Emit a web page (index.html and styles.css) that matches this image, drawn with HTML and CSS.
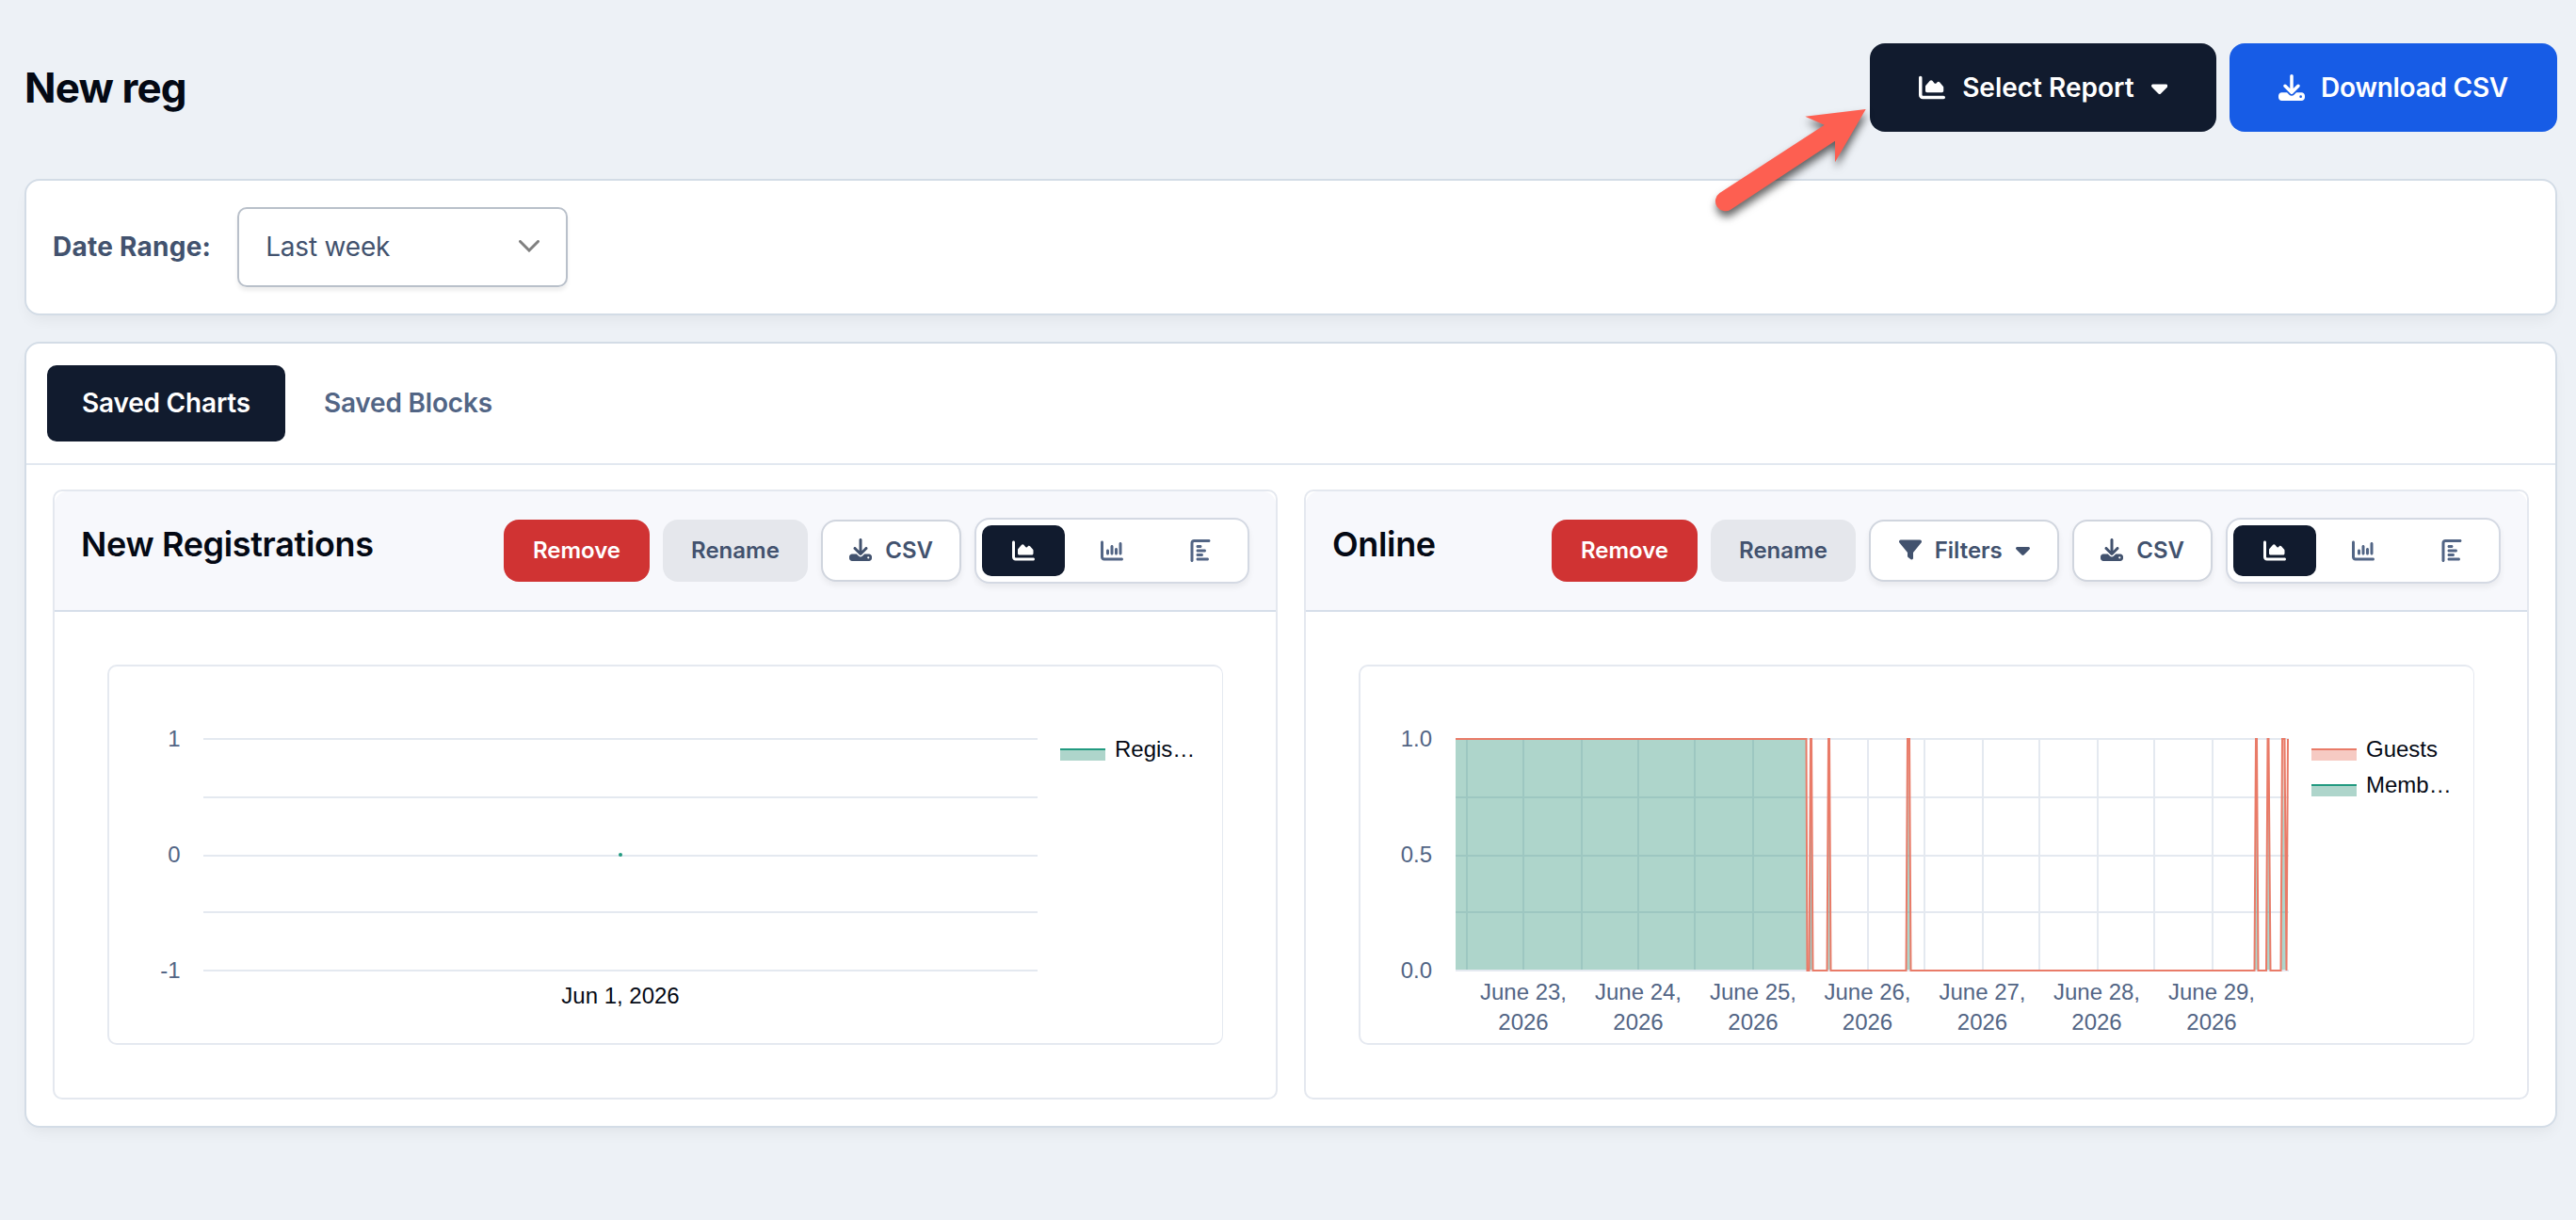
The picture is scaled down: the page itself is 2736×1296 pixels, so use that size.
FILE: index.html
```html
<!DOCTYPE html>
<html lang="en">
<head>
  <meta charset="UTF-8">
  <meta name="viewport" content="width=device-width, initial-scale=1.0">
  <title>New reg</title>
  <link rel="stylesheet" href="styles.css">
</head>
<body>
  <!-- Icon sprite -->
  <svg class="sprite" width="0" height="0">
    <symbol id="i-area" viewBox="0 0 512 512"><path d="M64 64c0-17.7-14.3-32-32-32S0 46.3 0 64V400c0 44.2 35.8 80 80 80H480c17.7 0 32-14.3 32-32s-14.3-32-32-32H80c-8.8 0-16-7.2-16-16V64zm96 288H448c17.7 0 32-14.3 32-32V251.8c0-7.6-2.7-15-7.7-20.8l-65.8-76.8c-12.1-14.2-33.7-15-46.9-1.8l-21 21c-10 10-26.4 9.2-35.4-1.6l-39.2-47c-12.6-15.1-35.7-15.4-48.7-.6L135.9 215c-5.1 5.8-7.9 13.3-7.9 21.1v84c0 17.7 14.3 32 32 32z"/></symbol>
    <symbol id="i-column" viewBox="0 0 512 512"><path d="M32 32c17.7 0 32 14.3 32 32V400c0 8.8 7.2 16 16 16H480c17.7 0 32 14.3 32 32s-14.3 32-32 32H80c-44.2 0-80-35.8-80-80V64C0 46.3 14.3 32 32 32zM160 224c17.7 0 32 14.3 32 32v64c0 17.7-14.3 32-32 32s-32-14.3-32-32V256c0-17.7 14.3-32 32-32zm128-64V320c0 17.7-14.3 32-32 32s-32-14.3-32-32V160c0-17.7 14.3-32 32-32s32 14.3 32 32zm64 32c17.7 0 32 14.3 32 32v96c0 17.7-14.3 32-32 32s-32-14.3-32-32V224c0-17.7 14.3-32 32-32zM480 96V320c0 17.7-14.3 32-32 32s-32-14.3-32-32V96c0-17.7 14.3-32 32-32s32 14.3 32 32z"/></symbol>
    <symbol id="i-download" viewBox="0 0 512 512"><path d="M288 32c0-17.7-14.3-32-32-32s-32 14.3-32 32V274.7l-73.4-73.4c-12.5-12.5-32.8-12.5-45.3 0s-12.5 32.8 0 45.3l128 128c12.5 12.5 32.8 12.5 45.3 0l128-128c12.5-12.5 12.5-32.8 0-45.3s-32.8-12.5-45.3 0L288 274.7V32zM64 352c-35.3 0-64 28.7-64 64v32c0 35.3 28.7 64 64 64H448c35.3 0 64-28.7 64-64V416c0-35.3-28.7-64-64-64H346.5l-45.3 45.3c-25 25-65.5 25-90.5 0L165.5 352H64zm368 56a24 24 0 1 1 0 48 24 24 0 1 1 0-48z"/></symbol>
    <symbol id="i-filter" viewBox="0 0 512 512"><path d="M3.9 54.9C10.5 40.9 24.5 32 40 32H472c15.5 0 29.5 8.9 36.1 22.9s4.6 30.5-5.2 42.5L320 320.9V448c0 12.1-6.8 23.2-17.7 28.6s-23.8 4.3-33.5-3l-64-48c-8.1-6-12.8-15.5-12.8-25.6V320.9L9 97.3C-.7 85.4-2.8 68.8 3.9 54.9z"/></symbol>
    <symbol id="i-caret" viewBox="0 0 320 512"><path d="M137.4 374.6c12.5 12.5 32.8 12.5 45.3 0l128-128c9.2-9.2 11.9-22.9 6.9-34.9s-16.6-19.8-29.6-19.8L32 192c-12.9 0-24.6 7.8-29.6 19.8s-2.2 25.7 6.9 34.9l128 128z"/></symbol>
  </svg>

  <header class="page-header">
    <h1 class="page-title">New reg</h1>
    <div class="page-actions">
      <button class="btn btn-dark">
        <svg class="icon"><use href="#i-area"/></svg>
        <span>Select Report</span>
        <svg class="icon icon-caret"><use href="#i-caret"/></svg>
      </button>
      <button class="btn btn-primary">
        <svg class="icon"><use href="#i-download"/></svg>
        <span>Download CSV</span>
      </button>
    </div>
  </header>

  <section class="card filter-card">
    <span class="filter-label">Date Range:</span>
    <div class="select">
      <span>Last week</span>
      <svg class="select-arrow" viewBox="0 0 22 13"><path d="M1.5 1.5L11 11L20.5 1.5"/></svg>
    </div>
  </section>

  <section class="card">
    <nav class="tabs">
      <a class="tab active">Saved Charts</a>
      <a class="tab">Saved Blocks</a>
    </nav>

    <div class="panels">
      <!-- New registrations -->
      <article class="panel">
        <div class="panel-header">
          <h2 class="panel-title">New Registrations</h2>
          <div class="toolbar">
            <button class="btn-sm btn-danger">Remove</button>
            <button class="btn-sm btn-muted">Rename</button>
            <button class="btn-sm btn-outline"><svg class="icon"><use href="#i-download"/></svg><span>CSV</span></button>
            <div class="chart-switch">
              <button class="active"><svg class="icon"><use href="#i-area"/></svg></button>
              <button><svg class="icon"><use href="#i-column"/></svg></button>
              <button><svg class="icon rotated"><use href="#i-column"/></svg></button>
            </div>
          </div>
        </div>
        <div class="panel-body">
          <svg class="chart" viewBox="116.5 708 1181 400">
            <g class="grid">
              <path d="M216 785H1102M216 847H1102M216 909H1102M216 969H1102M216 1031H1102"/>
            </g>
            <circle class="point" cx="659" cy="908" r="2"/>
            <g class="axis-y">
              <text x="191.5" y="793">1</text>
              <text x="191.5" y="916">0</text>
              <text x="191.5" y="1039">-1</text>
            </g>
            <text class="axis-x dark" x="659" y="1066">Jun 1, 2026</text>
            <rect class="fill-members" x="1126" y="796" width="48" height="12"/>
            <path class="line-members" d="M1126 796H1174"/>
            <text class="legend" x="1184" y="804">Regis…</text>
          </svg>
        </div>
      </article>

      <!-- Online -->
      <article class="panel">
        <div class="panel-header">
          <h2 class="panel-title">Online</h2>
          <div class="toolbar">
            <button class="btn-sm btn-danger">Remove</button>
            <button class="btn-sm btn-muted">Rename</button>
            <button class="btn-sm btn-outline btn-filters"><svg class="icon"><use href="#i-filter"/></svg><span>Filters</span><svg class="icon icon-caret"><use href="#i-caret"/></svg></button>
            <button class="btn-sm btn-outline"><svg class="icon"><use href="#i-download"/></svg><span>CSV</span></button>
            <div class="chart-switch">
              <button class="active"><svg class="icon"><use href="#i-area"/></svg></button>
              <button><svg class="icon"><use href="#i-column"/></svg></button>
              <button><svg class="icon rotated"><use href="#i-column"/></svg></button>
            </div>
          </div>
        </div>
        <div class="panel-body">
          <svg class="chart" viewBox="1445.5 708 1181 400">
            <g class="grid">
              <path d="M1546 785H2431M1546 847H2431M1546 909H2431M1546 969H2431M1546 1031H2431"/>
              <path d="M1558 786V1030M1618 786V1030M1680 786V1030M1740 786V1030M1800 786V1030M1862 786V1030M1923 786V1030M1984 786V1030M2044 786V1030M2106 786V1030M2166 786V1030M2228 786V1030M2288 786V1030M2350 786V1030"/>
            </g>
            <path class="fill-members" d="M1546 785H1918.5L1919.5 1030H1546zM1921.5 1030L1923.5 785L1925.5 1030zM1940.5 1030L1942.5 785L1944.5 1030zM2025 1030L2026.5 785L2029.5 1030zM2394.5 1030L2396.5 785L2398.5 1030zM2407.5 1030L2409.5 785L2411.5 1030zM2423 1030L2424.5 785L2428.5 1030z"/>
            <path class="fill-guests" d="M2026 785H2028L2029.5 1030zM2424.5 785H2426.5L2428.5 1030zM2428.5 1030L2430 785V900z"/>
            <path class="line-guests" d="M1546 785H1918.5L1919.5 1031H1921.5L1923 785H1924L1925.5 1031H1940.5L1942 785H1943L1944.5 1031H2024.5L2026 785H2028L2029.5 1031H2394.5L2396 785H2397L2398.5 1031H2407L2408.500 785H2409.5L2411.5 1031H2422.5L2424 785H2426.5L2428.5 1031L2430 785"/>
            <g class="axis-y">
              <text x="1521" y="793">1.0</text>
              <text x="1521" y="916">0.5</text>
              <text x="1521" y="1039">0.0</text>
            </g>
            <g class="axis-x">
              <text x="1618" y="1062">June 23,</text><text x="1618" y="1094">2026</text>
              <text x="1740" y="1062">June 24,</text><text x="1740" y="1094">2026</text>
              <text x="1862" y="1062">June 25,</text><text x="1862" y="1094">2026</text>
              <text x="1983.5" y="1062">June 26,</text><text x="1983.5" y="1094">2026</text>
              <text x="2105.5" y="1062">June 27,</text><text x="2105.5" y="1094">2026</text>
              <text x="2227" y="1062">June 28,</text><text x="2227" y="1094">2026</text>
              <text x="2349" y="1062">June 29,</text><text x="2349" y="1094">2026</text>
            </g>
            <rect class="fill-guests" x="2455" y="796" width="48" height="12"/>
            <path class="line-guests" d="M2455 796H2503"/>
            <text class="legend" x="2513" y="804">Guests</text>
            <rect class="fill-members" x="2455" y="834" width="48" height="12"/>
            <path class="line-members" d="M2455 834H2503"/>
            <text class="legend" x="2513" y="842">Memb…</text>
          </svg>
        </div>
      </article>
    </div>
  </section>

  <svg class="pointer-arrow" viewBox="1810 100 190 150">
    <path d="M1981.7 116L1917.3 123.7L1937.7 132.7L1826.5 205A10.3 10.3 0 0 0 1838.5 222.4L1949 149.7V172.3z"/>
  </svg>
</body>
</html>
```
FILE: styles.css
```css
* {
  box-sizing: border-box;
}

body {
  margin: 0;
  padding: 46px 20px 0 26px;
  background-color: #edf1f6;
  color: #040914;
  font-family: Inter, "Liberation Sans", sans-serif;
  font-size: 28px;
}

h1,
h2 {
  margin: 0;
}

button {
  font-family: inherit;
  border: none;
  margin: 0;
  padding: 0;
  cursor: pointer;
}

.sprite {
  position: absolute;
}

.icon {
  width: 1em;
  height: 1em;
  fill: currentColor;
  flex-shrink: 0;
}

.icon-caret {
  width: 0.625em;
}

/* Page header */
.page-header {
  display: flex;
  justify-content: space-between;
  align-items: center;
  margin-bottom: 50px;
}

.page-title {
  font-size: 44px;
  font-weight: 700;
  letter-spacing: -0.02em;
}

.page-actions {
  display: flex;
  gap: 14px;
}

.btn {
  display: flex;
  align-items: center;
  gap: 17px;
  height: 94px;
  padding: 0 52px;
  border-radius: 16px;
  font-size: 28px;
  font-weight: 600;
  color: #fff;
}

.btn-dark {
  gap: 18px;
  background-color: #111b2e;
}

.btn-primary {
  background-color: #175ce6;
  letter-spacing: -0.25px;
}

/* Cards */
.card {
  background-color: #fff;
  border: 2px solid #d3dce6;
  border-radius: 16px;
  box-shadow: 0 8px 16px -4px rgba(0, 0, 0, 0.06);
  margin-bottom: 28px;
}

.filter-card {
  display: flex;
  align-items: center;
  gap: 28px;
  height: 145px;
  padding: 0 28px;
}

.filter-label {
  padding-bottom: 1px;
  font-weight: 700;
  letter-spacing: 0.25px;
  color: #42526e;
}

.select {
  display: flex;
  justify-content: space-between;
  align-items: center;
  width: 351px;
  height: 85px;
  padding: 0 28px 2px;
  border: 2px solid #b9c0ca;
  border-radius: 10px;
  box-shadow: 0 4px 4px rgba(0, 0, 0, 0.07);
  letter-spacing: -0.2px;
  color: #42526e;
}

.select-arrow {
  width: 22px;
  height: 13px;
  fill: none;
  stroke: #808080;
  stroke-width: 3;
  stroke-linecap: round;
}

/* Tabs */
.tabs {
  display: flex;
  gap: 4px;
  padding: 23px 22px;
  border-bottom: 2px solid #e2e8f0;
}

.tab {
  display: flex;
  align-items: center;
  height: 81px;
  padding: 0 37px 2px;
  border-radius: 10px;
  font-weight: 600;
  letter-spacing: -0.2px;
  color: #526585;
}

.tab.active {
  background-color: #111b2e;
  color: #fff;
}

/* Chart panels */
.panels {
  display: grid;
  grid-template-columns: 1fr 1fr;
  gap: 28px;
  padding: 26px 28px 28px;
}

.panel {
  border: 2px solid #e4e8ef;
  border-radius: 10px;
}

.panel-header {
  display: flex;
  justify-content: space-between;
  align-items: flex-start;
  height: 128px;
  padding: 28px;
  background-color: #f7f8fc;
  border-bottom: 2px solid #d6deea;
  border-radius: 14px 14px 0 0;
}

.panel-title {
  font-size: 36px;
  font-weight: 600;
  line-height: 56px;
  letter-spacing: -0.35px;
}

.toolbar {
  display: flex;
  align-items: center;
  gap: 14px;
}

.btn-sm {
  display: flex;
  align-items: center;
  justify-content: center;
  gap: 14px;
  min-width: 154.5px;
  height: 66px;
  padding: 0 30px 2px;
  border-radius: 16px;
  font-size: 24px;
  font-weight: 600;
  color: #42526e;
}

.btn-danger {
  background-color: #d03333;
  color: #fff;
}

.btn-muted {
  background-color: #e5e7ec;
}

.btn-outline {
  min-width: 0;
  padding: 0 28px 2px;
  background-color: #fff;
  border: 2px solid #d0d5de;
  box-shadow: 0 4px 6px rgba(0, 0, 0, 0.06);
}

.btn-filters {
  min-width: 202px;
}

.chart-switch {
  display: flex;
  gap: 6px;
  padding: 6px;
  background-color: #fff;
  border: 2px solid #d4d9e3;
  border-radius: 16px;
  box-shadow: 0 4px 6px rgba(0, 0, 0, 0.06);
}

.chart-switch button {
  display: flex;
  align-items: center;
  justify-content: center;
  width: 88px;
  height: 54px;
  border-radius: 10px;
  background-color: transparent;
  font-size: 24px;
  color: #526585;
}

.chart-switch .active {
  background-color: #111b2e;
  color: #fff;
}

.rotated {
  transform: rotate(90deg);
}

.panel-body {
  padding: 56px;
}

/* Charts */
.chart {
  display: block;
  width: 100%;
  height: 404px;
  border: 2px solid #e5e9f0;
  border-right-width: 1px;
  border-radius: 10px;
  font-family: "Liberation Sans", Arial, sans-serif;
  font-size: 24px;
}

.grid {
  stroke: #e4e9f0;
  stroke-width: 2;
}

.axis-y {
  fill: #526585;
  text-anchor: end;
}

.axis-x {
  fill: #526585;
  text-anchor: middle;
}

.axis-x.dark,
.legend {
  fill: #040914;
}

.point {
  fill: #229a80;
}

.fill-members {
  fill: #228d72;
  fill-opacity: 0.37;
}

.fill-guests {
  fill: #e97b68;
  fill-opacity: 0.4;
}

.line-members {
  fill: none;
  stroke: #229a80;
  stroke-width: 2;
}

.line-guests {
  fill: none;
  stroke: #e97b68;
  stroke-width: 2;
}

/* Callout arrow over the header */
.pointer-arrow {
  position: absolute;
  left: 1810px;
  top: 100px;
  width: 190px;
  height: 150px;
  fill: #fd5f51;
  filter: drop-shadow(1px 6px 4px rgba(0, 0, 0, 0.6));
}
```
